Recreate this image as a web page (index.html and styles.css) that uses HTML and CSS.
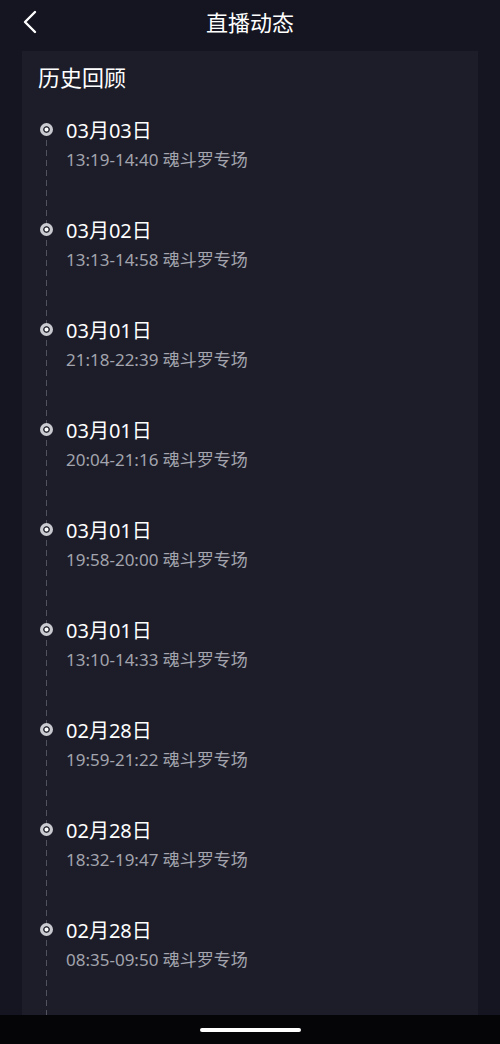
FILE: index.html
```html
<!DOCTYPE html>
<html lang="zh">
<head>
<meta charset="utf-8">
<link rel="stylesheet" href="styles.css">
</head>
<body>
<div class="screen">
  <header class="topbar">
    <svg class="back" width="16" height="24" viewBox="0 0 16 24"><path d="M13 2 L3 12 L13 22" fill="none" stroke="#fff" stroke-width="2.4" stroke-linecap="round" stroke-linejoin="round"/></svg>
    <h1 class="title">直播动态</h1>
  </header>
  <main class="card">
    <h2 class="card-title">历史回顾</h2>
    <ul class="timeline">
      <li class="item"><span class="dot"></span><div class="date">03月03日</div><div class="sub">13:19-14:40 魂斗罗专场</div></li>
      <li class="item"><span class="dot"></span><div class="date">03月02日</div><div class="sub">13:13-14:58 魂斗罗专场</div></li>
      <li class="item"><span class="dot"></span><div class="date">03月01日</div><div class="sub">21:18-22:39 魂斗罗专场</div></li>
      <li class="item"><span class="dot"></span><div class="date">03月01日</div><div class="sub">20:04-21:16 魂斗罗专场</div></li>
      <li class="item"><span class="dot"></span><div class="date">03月01日</div><div class="sub">19:58-20:00 魂斗罗专场</div></li>
      <li class="item"><span class="dot"></span><div class="date">03月01日</div><div class="sub">13:10-14:33 魂斗罗专场</div></li>
      <li class="item"><span class="dot"></span><div class="date">02月28日</div><div class="sub">19:59-21:22 魂斗罗专场</div></li>
      <li class="item"><span class="dot"></span><div class="date">02月28日</div><div class="sub">18:32-19:47 魂斗罗专场</div></li>
      <li class="item"><span class="dot"></span><div class="date">02月28日</div><div class="sub">08:35-09:50 魂斗罗专场</div></li>
    </ul>
  </main>
  <footer class="homebar"><span class="indicator"></span></footer>
</div>
</body>
</html>
```

FILE: styles.css
```css
* { box-sizing: border-box; }
html, body { margin: 0; padding: 0; }
body {
  background: #141520;
  font-family: "Noto Sans", "Noto Sans CJK SC", sans-serif;
  color: #fff;
}
.screen {
  width: 500px;
  height: 1044px;
  display: flex;
  flex-direction: column;
  overflow: hidden;
}
.topbar {
  height: 46px;
  display: flex;
  align-items: center;
  justify-content: center;
  position: relative;
  flex: none;
}
.back {
  position: absolute;
  left: 22px;
  top: 10px;
}
.title {
  margin: 0;
  font-size: 22px;
  font-weight: 400;
  line-height: 30px;
  margin-top: -2px;
}
.card {
  flex: 1;
  margin: 5px 22px 0;
  background: #1c1d29;
  padding: 11px 16px 0;
  overflow: hidden;
}
.card-title {
  margin: 0;
  font-size: 22px;
  font-weight: 400;
  line-height: 30px;
}
.timeline {
  list-style: none;
  margin: 26px 0 0;
  padding: 0;
  position: relative;
}
.timeline::before {
  content: "";
  position: absolute;
  left: 8px;
  top: 12px;
  width: 1px;
  height: 2000px;
  background: repeating-linear-gradient(to bottom, #50525e 0 6px, transparent 6px 10px);
}
.item {
  position: relative;
  padding-left: 28px;
  height: 100px;
}
.dot {
  position: absolute;
  left: 2px;
  top: 5px;
  width: 13px;
  height: 13px;
  border-radius: 50%;
  background: #fff;
  border: 3px solid #c9cad0;
  box-shadow: inset 0 0 0 1.5px #2a2b36;
}
.date {
  font-size: 20px;
  line-height: 26px;
  color: #fff;
}
.sub {
  margin-top: 5px;
  font-size: 17px;
  line-height: 22px;
  color: #a3a4ad;
}
.homebar {
  flex: none;
  height: 29px;
  background: #050507;
  display: flex;
  align-items: center;
  justify-content: center;
}
.indicator {
  width: 101px;
  height: 4px;
  border-radius: 2px;
  background: #fff;
}
```
